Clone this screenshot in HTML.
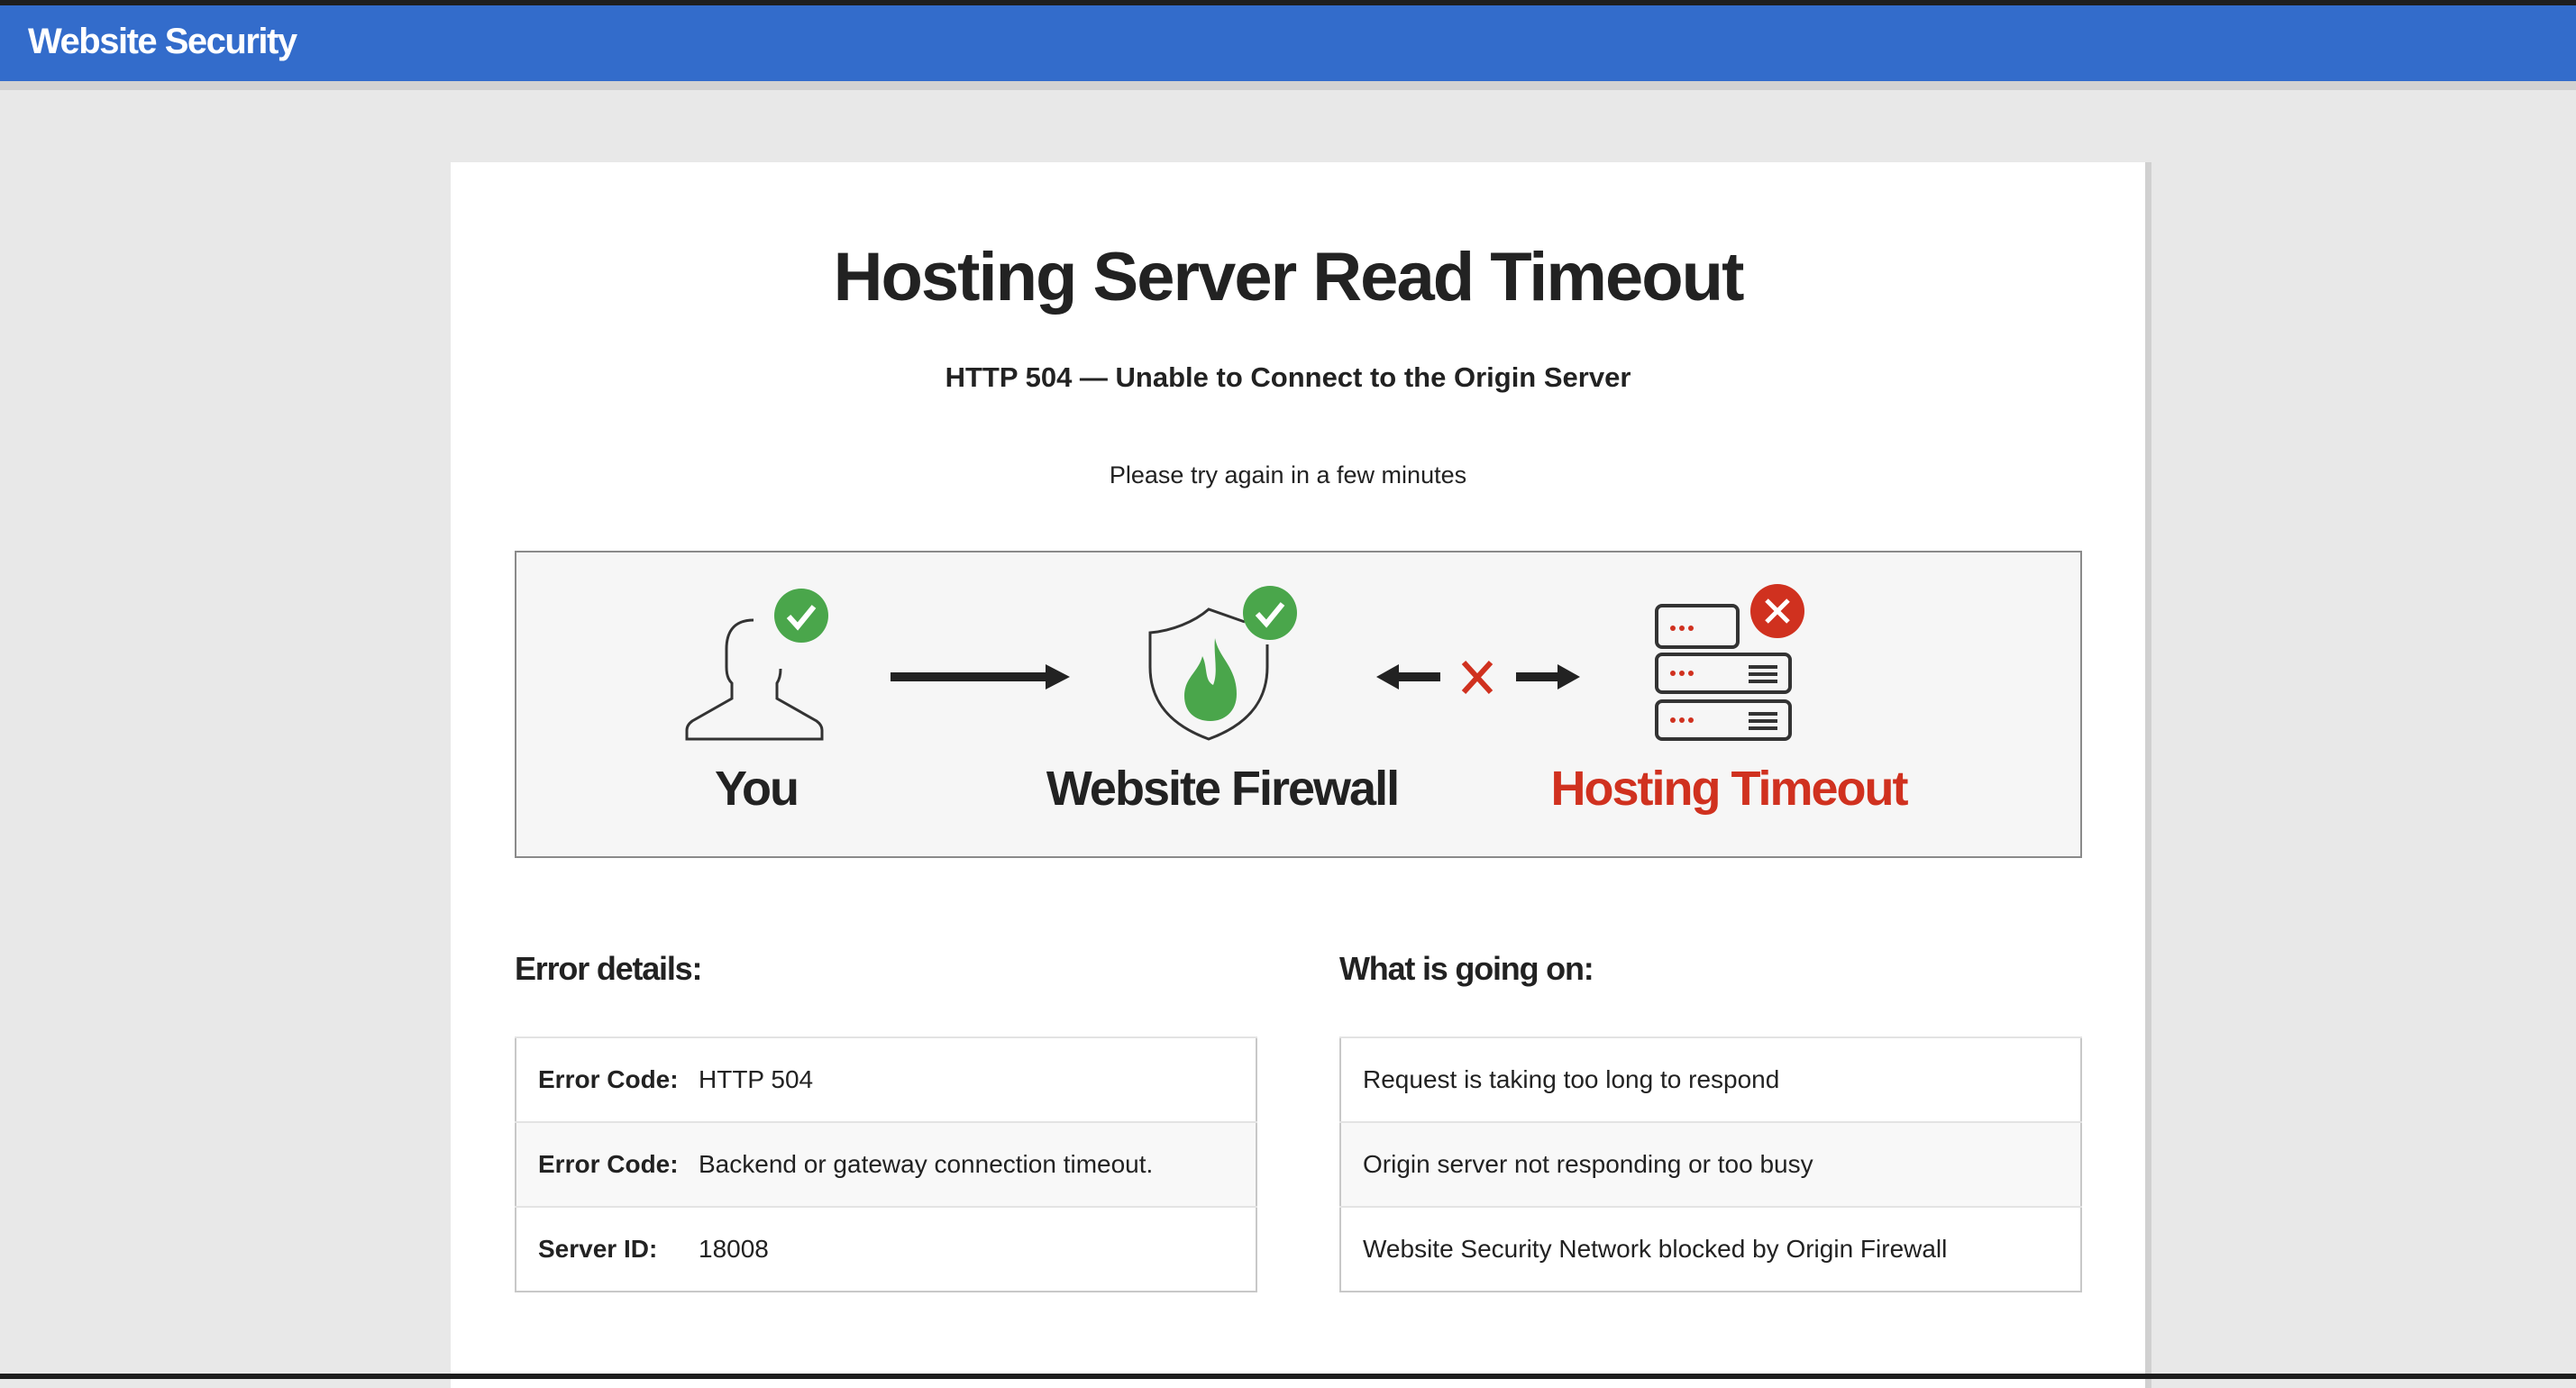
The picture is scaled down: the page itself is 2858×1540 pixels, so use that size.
<!DOCTYPE html>
<html><head><meta charset="utf-8"><style>
*{margin:0;padding:0;box-sizing:border-box}
body{width:2858px;height:1530px;background:#e8e8e8;font-family:"Liberation Sans",sans-serif;position:relative;overflow:hidden;color:#222}
.abs{position:absolute}
.top{left:0;top:0;width:2858px;height:6px;background:#1e1e1e}
.blue{left:0;top:6px;width:2858px;height:84px;background:#336ccb}
.strip{left:0;top:90px;width:2858px;height:10px;background:#d2d2d2}
.logo{left:31px;top:24px;font-size:40px;font-weight:bold;color:#fff;letter-spacing:-1.5px}
.card{left:500px;top:180px;width:1880px;height:1360px;background:#fff;box-shadow:7px 0 0 #d0d0d0}
.c{text-align:center;width:2858px;left:0}
h1{position:absolute;font-size:76px;letter-spacing:-2px;font-weight:bold}
.diag{left:571px;top:611px;width:1739px;height:341px;background:#f6f6f6;border:2px solid #8a8a8a}
.lbl{font-weight:bold;font-size:54px;letter-spacing:-2px;transform:translateX(-50%);white-space:nowrap;top:844px}
.h3{font-weight:bold;font-size:36px;letter-spacing:-1.2px;top:1054px}
table{position:absolute;border-collapse:collapse;border:2px solid #c8c8c8;width:824px;font-size:28px}
td{height:94px;border-top:2px solid #e3e3e3;padding-left:24px;color:#222}
tr:nth-child(2) td{background:#f8f8f8}
td b{display:inline-block;width:178px}
</style></head><body>
<div class="abs top"></div>
<div class="abs blue"></div>
<div class="abs strip"></div>
<div class="abs logo">Website Security</div>
<div class="abs card"></div>
<h1 class="c" style="top:264px">Hosting Server Read Timeout</h1>
<div class="abs c" style="top:401px;font-size:31px;font-weight:bold">HTTP 504 — Unable to Connect to the Origin Server</div>
<div class="abs c" style="top:512px;font-size:27px">Please try again in a few minutes</div>
<div class="abs diag"></div>
<svg class="abs" style="left:0;top:0" width="2858" height="1000">
<path d="M836 688 C812 688 806 704 806 720 L806 740 C806 752 810 756 812 758 L812 775 L768 800 C764 803 762 806 762 810 L762 820 L912 820 L912 810 C912 806 910 803 906 800 L862 775 L862 758 C864 755 866 750 866 742" fill="none" stroke="#333" stroke-width="3"/>
<circle cx="889" cy="683" r="30" fill="#4aa64b"/>
<path d="M875 684 L885 695 L903 673" fill="none" stroke="#fff" stroke-width="6"/>
<rect x="988" y="746" width="175" height="10" fill="#222"/>
<path d="M1160 737 L1187 751 L1160 765Z" fill="#222"/>
<path d="M1381 690 L1341 676 C1325 690 1300 700 1276 702 L1276 740 C1276 780 1300 805 1341 820 C1382 805 1406 780 1406 740 L1406 715" fill="none" stroke="#333" stroke-width="3"/>
<path d="M1348 708 C1352 730 1372 740 1372 770 C1372 790 1358 800 1343 800 C1326 800 1314 790 1314 772 C1314 752 1330 745 1334 728 C1340 740 1336 755 1346 760 C1352 745 1346 725 1348 708Z" fill="#4aa64b"/>
<circle cx="1409" cy="680" r="30" fill="#4aa64b"/>
<path d="M1395 681 L1405 692 L1423 670" fill="none" stroke="#fff" stroke-width="6"/>
<path d="M1527 751 L1552 737 L1552 765Z" fill="#222"/><rect x="1548" y="746" width="50" height="10" fill="#222"/>
<path d="M1753 751 L1728 737 L1728 765Z" fill="#222"/><rect x="1682" y="746" width="50" height="10" fill="#222"/>
<path d="M1624 735 L1654 768 M1654 735 L1624 768" stroke="#d0311f" stroke-width="6"/>
<rect x="1838" y="672" width="90" height="46" rx="6" fill="none" stroke="#333" stroke-width="4"/>
<rect x="1838" y="726" width="148" height="42" rx="6" fill="none" stroke="#333" stroke-width="4"/>
<rect x="1838" y="778" width="148" height="42" rx="6" fill="none" stroke="#333" stroke-width="4"/>
<g fill="#d0311f"><circle cx="1856" cy="697" r="3"/><circle cx="1866" cy="697" r="3"/><circle cx="1876" cy="697" r="3"/>
<circle cx="1856" cy="747" r="3"/><circle cx="1866" cy="747" r="3"/><circle cx="1876" cy="747" r="3"/>
<circle cx="1856" cy="799" r="3"/><circle cx="1866" cy="799" r="3"/><circle cx="1876" cy="799" r="3"/></g>
<g fill="#333"><rect x="1940" y="738" width="32" height="4"/><rect x="1940" y="746" width="32" height="4"/><rect x="1940" y="754" width="32" height="4"/>
<rect x="1940" y="790" width="32" height="4"/><rect x="1940" y="798" width="32" height="4"/><rect x="1940" y="806" width="32" height="4"/></g>
<circle cx="1972" cy="678" r="30" fill="#d0311f"/>
<path d="M1960 666 L1984 690 M1984 666 L1960 690" stroke="#fff" stroke-width="5"/>
</svg>
<div class="abs lbl" style="left:839px">You</div>
<div class="abs lbl" style="left:1356px">Website Firewall</div>
<div class="abs lbl" style="left:1918px;color:#d0311f">Hosting Timeout</div>
<div class="abs h3" style="left:571px">Error details:</div>
<div class="abs h3" style="left:1486px">What is going on:</div>
<table style="left:571px;top:1150px">
<tr><td><b>Error Code:</b>HTTP 504</td></tr>
<tr><td><b>Error Code:</b>Backend or gateway connection timeout.</td></tr>
<tr><td><b>Server ID:</b>18008</td></tr>
</table>
<table style="left:1486px;top:1150px">
<tr><td>Request is taking too long to respond</td></tr>
<tr><td>Origin server not responding or too busy</td></tr>
<tr><td>Website Security Network blocked by Origin Firewall</td></tr>
</table>
<div class="abs" style="left:0;top:1524px;width:2858px;height:6px;background:#1e1e1e"></div>
</body></html>
